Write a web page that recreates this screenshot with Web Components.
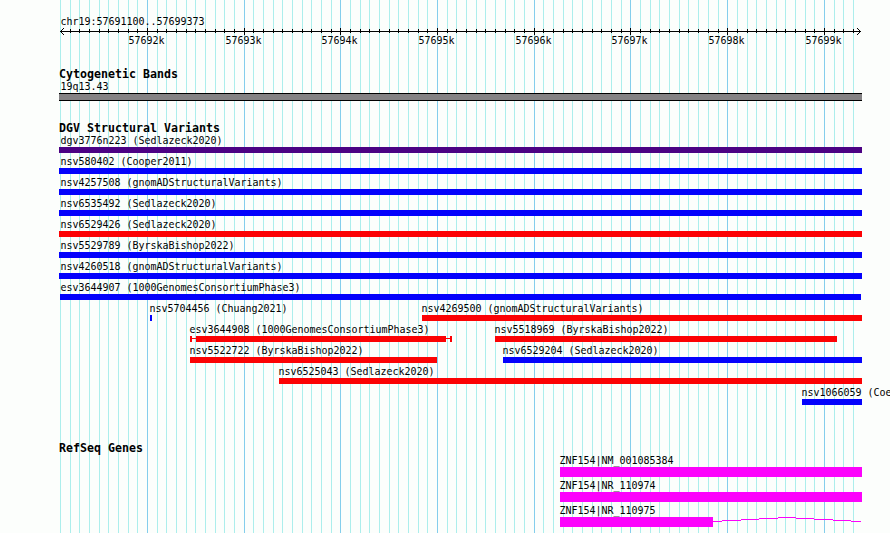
<!DOCTYPE html>
<html lang="en">
<head>
<meta charset="utf-8">
<title>chr19:57691100..57699373</title>
<style>
html, body { margin: 0; width: 890px; height: 533px; overflow: hidden; background: #fcfefc; }
body { font-family: "DejaVu Sans Mono", "Liberation Mono", monospace; color: #000; }
</style>
</head>
<body>
<genome-view>
  <genome-ruler heading="chr19:57691100..57699373"></genome-ruler>
  <genome-track heading="Cytogenetic Bands" style="height:54px">
    <track-row><track-feature kind="band" x="59" end="862" label-x="60" label="19q13.43"></track-feature></track-row>
  </genome-track>
  <genome-track heading="DGV Structural Variants" style="height:320px">
    <track-row><track-feature x="59" end="862" label-x="60" color="#4c0284" label="dgv3776n223 (Sedlazeck2020)"></track-feature></track-row>
    <track-row><track-feature x="59" end="862" label-x="60" label="nsv580402 (Cooper2011)"></track-feature></track-row>
    <track-row><track-feature x="59" end="862" label-x="60" label="nsv4257508 (gnomADStructuralVariants)"></track-feature></track-row>
    <track-row><track-feature x="59" end="862" label-x="60" label="nsv6535492 (Sedlazeck2020)"></track-feature></track-row>
    <track-row><track-feature x="59" end="862" label-x="60" color="#fc0204" label="nsv6529426 (Sedlazeck2020)"></track-feature></track-row>
    <track-row><track-feature x="59" end="862" label-x="60" label="nsv5529789 (ByrskaBishop2022)"></track-feature></track-row>
    <track-row><track-feature x="59" end="862" label-x="60" label="nsv4260518 (gnomADStructuralVariants)"></track-feature></track-row>
    <track-row><track-feature x="60" end="861" label-x="60" label="esv3644907 (1000GenomesConsortiumPhase3)"></track-feature></track-row>
    <track-row>
      <track-feature x="150" end="152" label-x="149" label="nsv5704456 (Chuang2021)"></track-feature>
      <track-feature x="422" end="862" label-x="421" color="#fc0204" label="nsv4269500 (gnomADStructuralVariants)"></track-feature>
    </track-row>
    <track-row>
      <track-feature kind="range" x="190" end="452" label-x="189" color="#fc0204" label="esv3644908 (1000GenomesConsortiumPhase3)"></track-feature>
      <track-feature x="495" end="837" label-x="494" color="#fc0204" label="nsv5518969 (ByrskaBishop2022)"></track-feature>
    </track-row>
    <track-row>
      <track-feature x="190" end="437" label-x="189" color="#fc0204" label="nsv5522722 (ByrskaBishop2022)"></track-feature>
      <track-feature x="503" end="862" label-x="502" label="nsv6529204 (Sedlazeck2020)"></track-feature>
    </track-row>
    <track-row><track-feature x="279" end="862" label-x="278" color="#fc0204" label="nsv6525043 (Sedlazeck2020)"></track-feature></track-row>
    <track-row><track-feature x="802" end="862" label-x="801" label="nsv1066059 (Coe"></track-feature></track-row>
  </genome-track>
  <genome-track heading="RefSeq Genes" style="height:90px">
    <track-row gene><track-feature kind="gene" x="560" end="862" label-x="559" label="ZNF154|NM_001085384"></track-feature></track-row>
    <track-row gene><track-feature kind="gene" x="560" end="862" label-x="559" label="ZNF154|NR_110974"></track-feature></track-row>
    <track-row gene><track-feature kind="gene" x="560" end="713" label-x="559" intron label="ZNF154|NR_110975"></track-feature></track-row>
  </genome-track>
</genome-view>

<script>
// Horizontal scale: genomic offset from 57,691,100 to pixels.
const START = 57691100;
const toX = bp => Math.round(60 + (bp - START) * 0.096692);
const positions = [];
for (let bp = START; bp <= 57699300; bp += 100) positions.push({ bp, x: toX(bp), major: bp % 1000 === 0 });

const TEXT = `
  .small { display: block; white-space: pre; font-size: 10px; line-height: 12px; height: 12px;
    letter-spacing: -0.0205px; transform: translateX(0.4px) scaleY(1.1); transform-origin: 0 9px; }
  .bold { display: block; white-space: pre; font-weight: bold; font-size: 11.6px; line-height: 15px; height: 13px;
    letter-spacing: 0.016px; }
`;

customElements.define('genome-view', class extends HTMLElement {
  constructor() {
    super();
    const lines = positions.map(p =>
      `<rect x="${p.x}" y="0" width="1" height="533" fill="${p.major ? '#84ceec' : '#aceeec'}"/>`).join('');
    this.attachShadow({ mode: 'open' }).innerHTML = `
      <style>
        :host { display: grid; width: 890px; height: 533px; overflow: hidden; }
        svg, .content { grid-area: 1 / 1; }
        svg { display: block; }
        .content { display: flex; flex-direction: column; }
      </style>
      <svg width="890" height="533" shape-rendering="crispEdges">${lines}</svg>
      <div class="content"><slot></slot></div>`;
  }
});

customElements.define('genome-ruler', class extends HTMLElement {
  constructor() {
    super();
    const ticks = positions.slice(1).map(p => p.major
      ? `<rect x="${p.x}" y="0" width="1" height="7"/>`
      : `<rect x="${p.x}" y="1" width="1" height="4"/>`).join('');
    const majors = positions.filter(p => p.major);
    const labels = majors.map((p, i) => {
      const left = p.x - 19 - (i ? majors[i - 1].x + 17 : 0);
      return `<span class="small" style="width:36px;margin-left:${left}px">${p.bp / 1000}k</span>`;
    }).join('');
    const head = [0, 1, 2, 3].map(i =>
      `<rect x="${60 + i}" y="${3 - i}" width="1" height="1"/><rect x="${60 + i}" y="${3 + i}" width="1" height="1"/>
       <rect x="${860 - i}" y="${3 - i}" width="1" height="1"/><rect x="${860 - i}" y="${3 + i}" width="1" height="1"/>`).join('');
    this.attachShadow({ mode: 'open' }).innerHTML = `
      <style>${TEXT}
        :host { display: block; height: 67px; }
        .title { padding: 16px 0 0 60px; }
        svg { display: block; }
        .labels { display: flex; }
      </style>
      <div class="title"><span class="small">${this.getAttribute('heading')}</span></div>
      <svg width="890" height="7" shape-rendering="crispEdges"><rect x="60" y="3" width="801" height="1"/>${ticks}${head}</svg>
      <div class="labels">${labels}</div>`;
  }
});

customElements.define('genome-track', class extends HTMLElement {
  constructor() {
    super();
    this.attachShadow({ mode: 'open' }).innerHTML = `
      <style>${TEXT}
        :host { display: block; }
        .bold { padding-left: 59px; height: 14px; }
      </style>
      <span class="bold">${this.getAttribute('heading')}</span><slot></slot>`;
  }
});

customElements.define('track-row', class extends HTMLElement {
  constructor() {
    super();
    this.attachShadow({ mode: 'open' }).innerHTML = `
      <style>:host { display: grid; height: 21px; } :host([gene]) { height: 25px; }</style><slot></slot>`;
  }
});

customElements.define('track-feature', class extends HTMLElement {
  constructor() {
    super();
    const num = n => Number(this.getAttribute(n));
    const x = num('x'), end = num('end'), w = end - x, kind = this.getAttribute('kind');
    const color = this.getAttribute('color') || '#0402fc';
    let shape, h = 6;
    if (kind === 'band') {
      h = 8;
      shape = `<rect width="${w}" height="8" fill="#000"/><rect y="1" width="${w}" height="6" fill="#848284"/>`;
    } else if (kind === 'gene') {
      h = 10;
      shape = `<rect width="${w}" height="10" fill="#fc02fc"/>`;
      if (this.hasAttribute('intron')) {
        // Shallow arch joining the exon to the next one, stepping one pixel at a time.
        shape += [[713, 722, 4], [722, 741, 3], [741, 759, 2], [759, 778, 1], [778, 796, 0],
          [796, 814, 1], [814, 833, 2], [833, 851, 3], [851, 861, 4]]
          .map(([a, b, y]) => `<rect x="${a - x}" y="${y}" width="${b - a}" height="1" fill="#fc02fc"/>`).join('');
      }
    } else if (kind === 'range') {
      shape = `<g fill="${color}"><rect width="2" height="6"/><rect y="2" width="${w}" height="1"/>
        <rect x="6" width="${w - 12}" height="6"/><rect x="${w - 2}" width="2" height="6"/></g>`;
    } else {
      shape = `<rect width="${w}" height="6" fill="${color}"/>`;
    }
    this.attachShadow({ mode: 'open' }).innerHTML = `
      <style>${TEXT}
        :host { display: block; grid-area: 1 / 1; width: 0; margin-left: ${x}px; }
        .small { margin-left: ${num('label-x') - x}px; }
        svg { display: block; overflow: visible; }
      </style>
      <span class="small">${this.getAttribute('label')}</span>
      <svg width="${w}" height="${h}" shape-rendering="crispEdges">${shape}</svg>`;
  }
});
</script>
</body>
</html>
